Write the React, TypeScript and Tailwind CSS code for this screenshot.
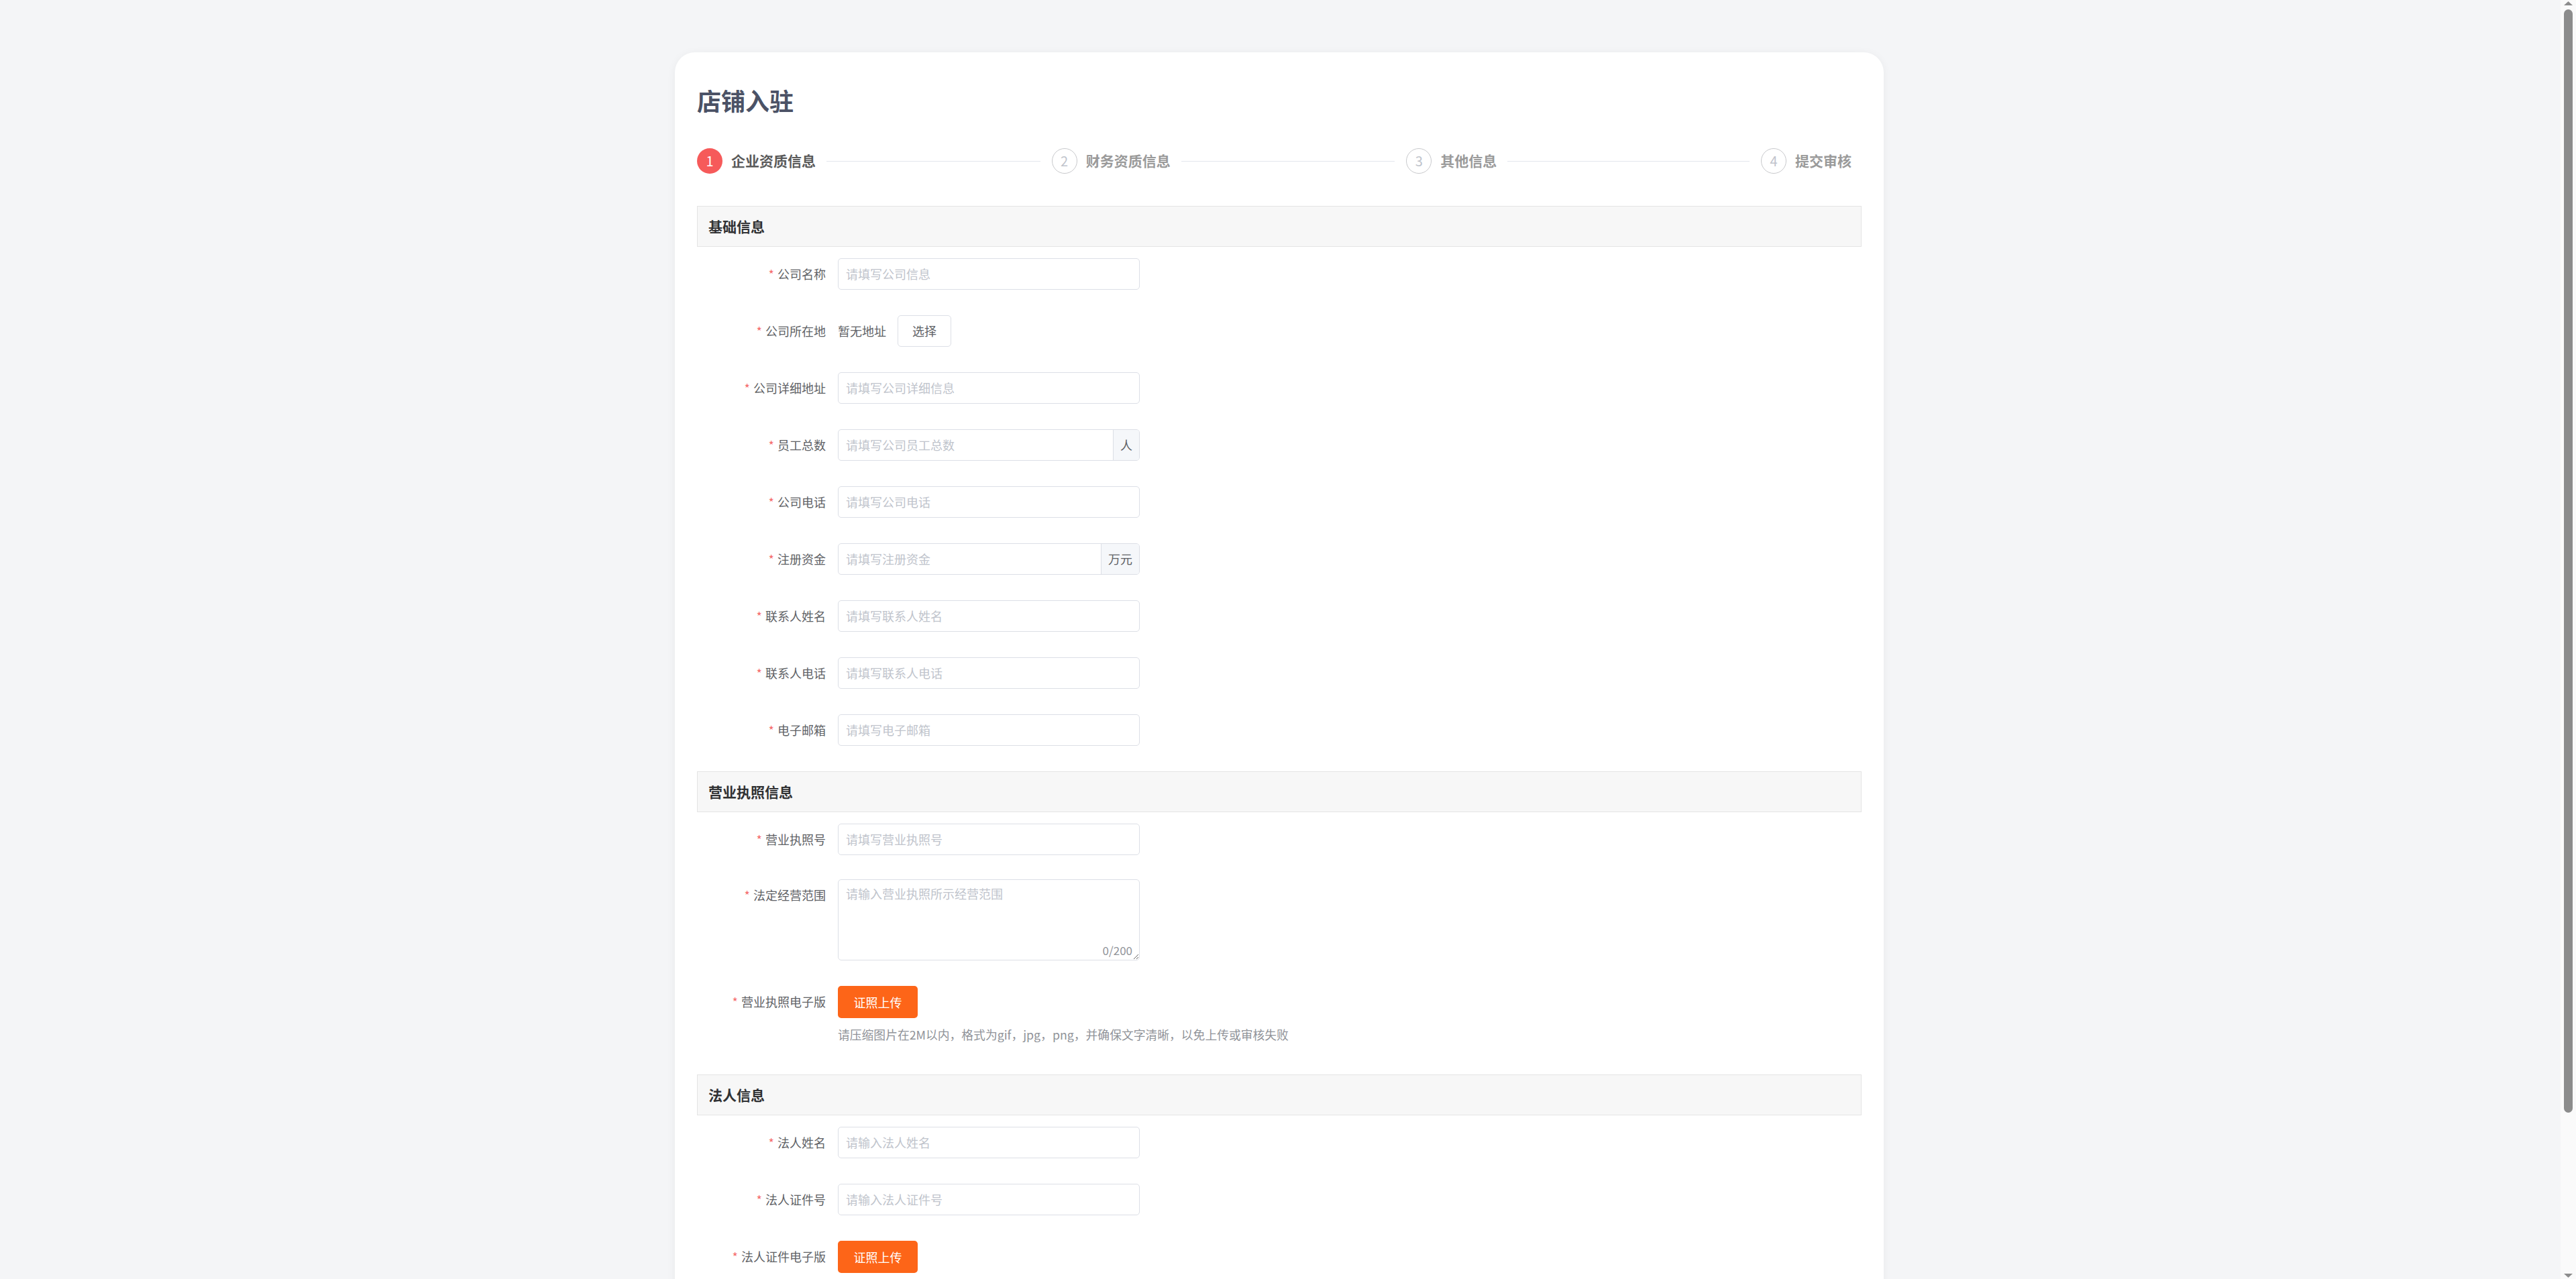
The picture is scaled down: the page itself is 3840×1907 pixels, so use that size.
import type { ReactNode } from 'react';

const STEPS = ['企业资质信息', '财务资质信息', '其他信息', '提交审核'];

const BASIC = [
  { label: '公司名称', placeholder: '请填写公司信息' },
  { label: '公司所在地', kind: 'address' },
  { label: '公司详细地址', placeholder: '请填写公司详细信息' },
  { label: '员工总数', placeholder: '请填写公司员工总数', suffix: '人' },
  { label: '公司电话', placeholder: '请填写公司电话' },
  { label: '注册资金', placeholder: '请填写注册资金', suffix: '万元' },
  { label: '联系人姓名', placeholder: '请填写联系人姓名' },
  { label: '联系人电话', placeholder: '请填写联系人电话' },
  { label: '电子邮箱', placeholder: '请填写电子邮箱' },
];

const TIP = '请压缩图片在2M以内，格式为gif，jpg，png，并确保文字清晰，以免上传或审核失败';

function SectionTitle({ title }: { title: string }) {
  return (
    <div className="mb-[17px] flex h-[61px] items-center border border-[#e4e4e4] bg-[#f7f7f7] pl-[16px] text-[21px] font-bold text-[#303133]">
      {title}
    </div>
  );
}

function Field({ label, children, className = 'mb-[38px]' }: { label: string; children: ReactNode; className?: string }) {
  return (
    <div className={`flex items-start ${className}`}>
      <label className="w-[210px] shrink-0 pr-[18px] text-right text-[18px] leading-[47px] text-[#606266]">
        <span className="mr-[5px] text-[#f56c6c]">*</span>
        {label}
      </label>
      <div>{children}</div>
    </div>
  );
}

function TextInput({ placeholder, suffix }: { placeholder: string; suffix?: string }) {
  return (
    <div className="flex h-[47px] w-[450px] overflow-hidden rounded-[5px] border border-[#dcdfe6] bg-white">
      <input
        className="min-w-0 flex-1 px-[11px] text-[18px] text-[#606266] outline-none placeholder:text-[#c0c4cc]"
        placeholder={placeholder}
      />
      {suffix && (
        <span className="flex items-center border-l border-[#dcdfe6] bg-[#f5f7fa] px-[10px] text-[18px] text-[#606266]">
          {suffix}
        </span>
      )}
    </div>
  );
}

function UploadButton() {
  return (
    <button
      type="button"
      className="h-[48px] w-[119px] rounded-[5px] bg-[#fd6518] text-[18px] text-white"
    >
      证照上传
    </button>
  );
}

function Tip() {
  return <p className="mt-[10px] whitespace-nowrap text-[17.8px] leading-[28px] text-[#909399]">{TIP}</p>;
}

// browser scrollbar as seen in the screenshot
function FakeScrollbar() {
  return (
    <div className="fixed top-0 right-0 flex h-screen w-[23px] flex-col items-center bg-[#fafafa] py-[2px]">
      <svg width="13" height="6" viewBox="0 0 13 6" className="shrink-0">
        <path d="M0 6 L6.5 0 L13 6 Z" fill="#8c8c8c" />
      </svg>
      <div className="mt-[6px] h-[1645px] w-[13px] rounded-full bg-[#8c8c8c]" />
      <div className="flex-1" />
      <svg width="13" height="6" viewBox="0 0 13 6" className="shrink-0">
        <path d="M0 0 L13 0 L6.5 6 Z" fill="#8c8c8c" />
      </svg>
    </div>
  );
}

export default function App() {
  return (
    <div className="min-h-screen bg-[#f4f5f7] pt-[78px] pr-[26px] pb-[80px] font-['Noto_Sans_CJK_SC','Noto_Sans',sans-serif]">
      <div className="mx-auto w-[1802px] rounded-[30px] bg-white px-[33px] pt-[46px] pb-[60px] shadow-[0_2px_14px_rgba(0,0,0,0.05)]">
        <h1 className="text-[36px] font-bold leading-[50px] text-[#4b5266]">店铺入驻</h1>

        <div className="mt-[46px] mb-[47px] flex h-[40px] items-center pr-[15px]">
          {STEPS.map((step, i) => {
            const last = i === STEPS.length - 1;
            return (
              <div key={step} className={`flex items-center ${last ? 'shrink-0' : 'flex-1'}`}>
                <span
                  className={`flex h-[38px] w-[38px] shrink-0 items-center justify-center rounded-full text-[20px] ${
                    i === 0 ? 'bg-[#f65a5a] text-white' : 'border border-[#c8c9cc] text-[#c0c4cc]'
                  }`}
                >
                  {i + 1}
                </span>
                <span
                  className={`ml-[13px] shrink-0 text-[21px] font-bold ${
                    i === 0 ? 'text-[#5a5a5a]' : 'text-[#9a9a9a]'
                  }`}
                >
                  {step}
                </span>
                {!last && <span className="ml-[16px] mr-[17px] h-px flex-1 bg-[#e4e7ed]" />}
              </div>
            );
          })}
        </div>

        <SectionTitle title="基础信息" />
        {BASIC.map((f) =>
          f.kind === 'address' ? (
            <Field key={f.label} label={f.label}>
              <div className="flex h-[47px] items-center">
                <span className="text-[18px] text-[#606266]">暂无地址</span>
                <button
                  type="button"
                  className="ml-[17px] h-[47px] rounded-[5px] border border-[#dcdfe6] bg-white px-[21px] text-[18px] text-[#606266]"
                >
                  选择
                </button>
              </div>
            </Field>
          ) : (
            <Field key={f.label} label={f.label}>
              <TextInput placeholder={f.placeholder ?? ''} suffix={f.suffix} />
            </Field>
          ),
        )}

        <SectionTitle title="营业执照信息" />
        <Field label="营业执照号" className="mb-[36px]">
          <TextInput placeholder="请填写营业执照号" />
        </Field>
        <Field label="法定经营范围">
          <div className="relative w-[450px]">
            <textarea
              className="block h-[121px] w-full resize-y rounded-[5px] border border-[#dcdfe6] px-[11px] py-[7px] text-[18px] text-[#606266] outline-none placeholder:text-[#c0c4cc]"
              placeholder="请输入营业执照所示经营范围"
            />
            <span className="absolute right-[11px] bottom-[3px] text-[17px] text-[#909399]">0/200</span>
          </div>
        </Field>
        <Field label="营业执照电子版" className="mb-[46px]">
          <UploadButton />
          <Tip />
        </Field>

        <SectionTitle title="法人信息" />
        <Field label="法人姓名">
          <TextInput placeholder="请输入法人姓名" />
        </Field>
        <Field label="法人证件号">
          <TextInput placeholder="请输入法人证件号" />
        </Field>
        <Field label="法人证件电子版" className="mb-[46px]">
          <UploadButton />
          <Tip />
        </Field>

        <div className="flex justify-center">
          <button
            type="button"
            className="h-[48px] w-[160px] rounded-[5px] bg-[#fd6518] text-[18px] text-white"
          >
            下一步
          </button>
        </div>
      </div>
      <FakeScrollbar />
    </div>
  );
}
